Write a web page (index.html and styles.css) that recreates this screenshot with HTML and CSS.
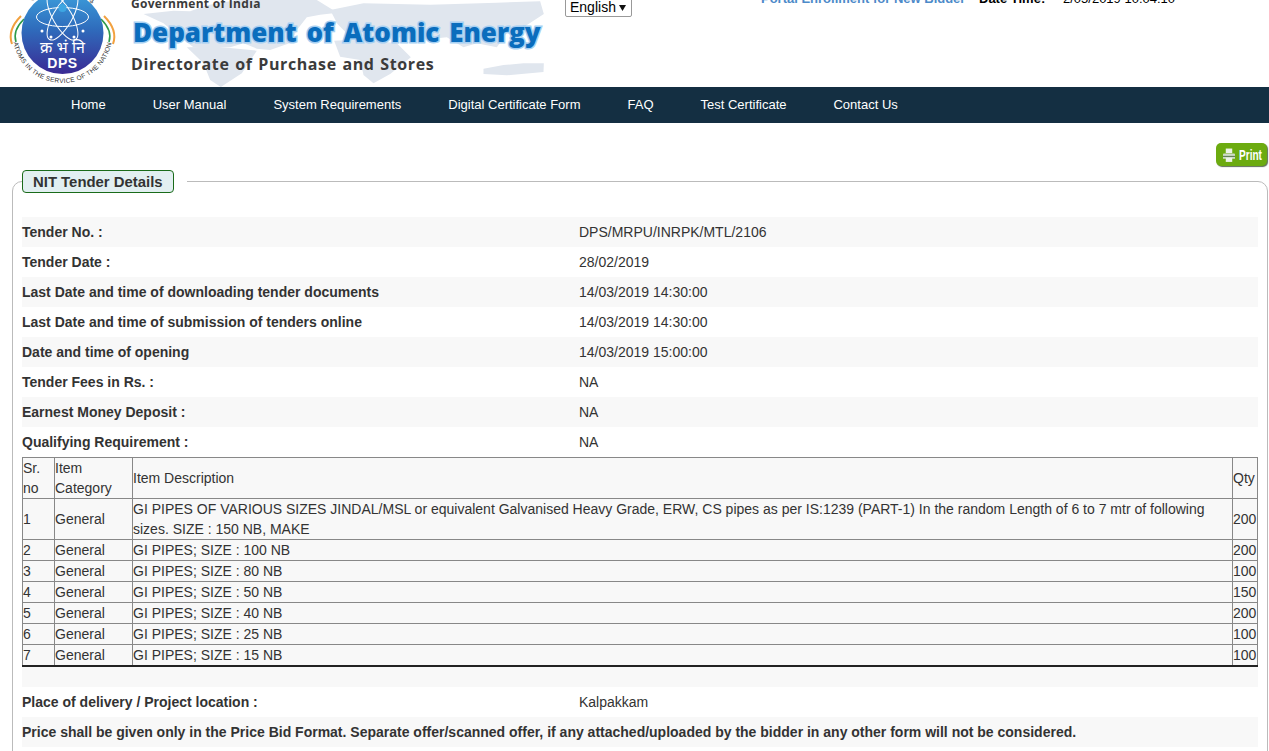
FILE: index.html
```html
<!DOCTYPE html>
<html lang="en">
<head>
<meta charset="utf-8">
<title>NIT Tender Details</title>
<link rel="stylesheet" href="styles.css">
</head>
<body>
<header class="top">
  <svg class="worldmap" width="414" height="87" viewBox="0 0 1241 261" aria-hidden="true">
    <g fill="#e0e6ee">
      <path d="M40 42 L130 32 L180 34 L230 16 L320 0 L560 0 L622 38 L570 44 L530 52 L500 90 L482 128 L420 150 L380 146 L340 130 L300 142 L190 142 L150 112 L100 70 Z"/>
      <path d="M170 142 L260 140 L380 152 L335 220 L272 261 L240 240 L220 190 Z"/>
      <path d="M600 30 L700 10 L900 14 L1100 8 L1230 4 L1241 42 L1180 82 L1130 100 L1100 142 L1040 130 L1000 142 L950 112 L850 122 L780 106 L660 110 L622 72 Z"/>
      <path d="M612 122 L700 118 L800 130 L842 172 L780 222 L730 250 L700 225 L690 180 L630 170 Z"/>
      <path d="M1060 206 L1120 195 L1180 190 L1241 190 L1240 216 L1130 226 L1060 222 Z"/>
    </g>
  </svg>
  <svg class="logo" width="120" height="87" viewBox="0 0 120 87" role="img" aria-label="DPS logo">
    <defs>
      <linearGradient id="disc" x1="0" y1="0" x2="0" y2="1">
        <stop offset="0" stop-color="#3c9fdc"/>
        <stop offset=".45" stop-color="#2f6cbc"/>
        <stop offset="1" stop-color="#3a2a94"/>
      </linearGradient>
      <path id="lower" d="M13 40 A50 50 0 0 0 112 40"/>
      <path id="upper" d="M21 20 A43.500 43.500 0 0 1 104 20"/>
    </defs>
    <path d="M12 44 C8 33 13 24 21 16" fill="none" stroke="#f2a13f" stroke-width="2"/>
    <path d="M16 42 C13 33 17 26 24 19" fill="none" stroke="#2e9a49" stroke-width="1.600"/>
    <path d="M113 44 C117 33 112 24 104 16" fill="none" stroke="#f2a13f" stroke-width="2"/>
    <path d="M109 42 C112 33 108 26 101 19" fill="none" stroke="#2e9a49" stroke-width="1.600"/>
    <circle cx="62.500" cy="33" r="41" fill="url(#disc)"/>
    <g fill="none" stroke="#fff" stroke-width="1">
      <ellipse cx="62.500" cy="17" rx="26" ry="9.500"/>
      <ellipse cx="62.500" cy="17" rx="26" ry="9.500" transform="rotate(60 62.500 17)"/>
      <ellipse cx="62.500" cy="17" rx="26" ry="9.500" transform="rotate(120 62.500 17)"/>
    </g>
    <circle cx="62.500" cy="8" r="4" fill="#3ea6e2"/>
    <g fill="#fff">
      <circle cx="42" cy="31" r="1.500"/><circle cx="83" cy="31" r="1.500"/>
      <circle cx="51" cy="37" r="1.500"/><circle cx="74" cy="37" r="1.500"/>
    </g>
    <text class="logo-hindi" x="62.500" y="53" text-anchor="middle">क्र भं नि</text>
    <text class="logo-dps" x="62.500" y="68" text-anchor="middle">DPS</text>
    <text class="logo-ring"><textPath href="#lower" startOffset="50%" text-anchor="middle">ATOMS IN THE SERVICE OF THE NATION</textPath></text>
    <text class="logo-top"><textPath href="#upper" startOffset="50%" text-anchor="middle">राष्ट्र की सेवा में परमाणु</textPath></text>
  </svg>
  <div class="brand">
    <div class="brand-gov">Government of India</div>
    <div class="brand-dept">Department of Atomic Energy</div>
    <div class="brand-dps">Directorate of Purchase and Stores</div>
  </div>
  <div class="lang"><select class="lang-select"><option>English</option></select></div>
  <div class="status">
    <a class="status-link" href="#">Portal Enrollment for New Bidder</a>
    <b class="status-label">Date Time:</b>
    <span class="status-time">2/05/2019 10:04:10</span>
  </div>
</header>
<nav class="menu">
  <a href="#">Home</a>
  <a href="#">User Manual</a>
  <a href="#">System Requirements</a>
  <a href="#">Digital Certificate Form</a>
  <a href="#">FAQ</a>
  <a href="#">Test Certificate</a>
  <a href="#">Contact Us</a>
</nav>
<main class="content">
  <div class="actions">
    <a class="print" href="#">
      <svg width="12" height="16" viewBox="0 0 13 16" aria-hidden="true">
        <path d="M3 1h7v5H3z" fill="#eef3ea"/>
        <path d="M1 6.500h11a1 1 0 0 1 1 1V12H0V7.500a1 1 0 0 1 1-1z" fill="#cfdcc8"/>
        <path d="M0 9.500h13" stroke="#4a6b3c" stroke-width="1"/>
        <path d="M3 11h7v4.500H3z" fill="#eef3ea"/>
      </svg>
      <span class="print-text">Print</span>
    </a>
  </div>
  <fieldset class="panel">
    <legend class="panel-legend"><span class="panel-title">NIT Tender Details</span></legend>
    <table class="details">
      <tr><th>Tender No. :</th><td>DPS/MRPU/INRPK/MTL/2106</td></tr>
      <tr><th>Tender Date :</th><td>28/02/2019</td></tr>
      <tr><th>Last Date and time of downloading tender documents</th><td>14/03/2019 14:30:00</td></tr>
      <tr><th>Last Date and time of submission of tenders online</th><td>14/03/2019 14:30:00</td></tr>
      <tr><th>Date and time of opening</th><td>14/03/2019 15:00:00</td></tr>
      <tr><th>Tender Fees in Rs. :</th><td>NA</td></tr>
      <tr><th>Earnest Money Deposit :</th><td>NA</td></tr>
      <tr><th>Qualifying Requirement :</th><td>NA</td></tr>
      <tr class="items-row"><td colspan="2" class="items-cell">
        <table class="items">
          <colgroup><col class="c-sr"><col class="c-cat"><col><col class="c-qty"></colgroup>
          <tr><td>Sr. no</td><td>Item Category</td><td>Item Description</td><td>Qty</td></tr>
          <tr><td>1</td><td>General</td><td>GI PIPES OF VARIOUS SIZES JINDAL/MSL or equivalent Galvanised Heavy Grade, ERW, CS pipes as per IS:1239 (PART-1) In the random Length of 6 to 7 mtr of following sizes. SIZE : 150 NB, MAKE</td><td>200</td></tr>
          <tr><td>2</td><td>General</td><td>GI PIPES; SIZE : 100 NB</td><td>200</td></tr>
          <tr><td>3</td><td>General</td><td>GI PIPES; SIZE : 80 NB</td><td>100</td></tr>
          <tr><td>4</td><td>General</td><td>GI PIPES; SIZE : 50 NB</td><td>150</td></tr>
          <tr><td>5</td><td>General</td><td>GI PIPES; SIZE : 40 NB</td><td>200</td></tr>
          <tr><td>6</td><td>General</td><td>GI PIPES; SIZE : 25 NB</td><td>100</td></tr>
          <tr><td>7</td><td>General</td><td>GI PIPES; SIZE : 15 NB</td><td>100</td></tr>
        </table>
      </td></tr>
      <tr><th>Place of delivery / Project location :</th><td>Kalpakkam</td></tr>
      <tr><th colspan="2">Price shall be given only in the Price Bid Format. Separate offer/scanned offer, if any attached/uploaded by the bidder in any other form will not be considered.</th></tr>
    </table>
  </fieldset>
</main>
</body>
</html>
```

FILE: styles.css
```css
html, body {
  margin: 0;
  height: 100%;
  overflow: hidden;
  background: #fff;
  font-family: "Liberation Sans", Arial, sans-serif;
  font-size: 14px;
  color: #333;
}
a { text-decoration: none; }

.top {
  position: relative;
  display: flex;
  height: 87px;
  overflow: hidden;
}
.worldmap {
  position: absolute;
  left: 130px;
  top: 0;
}
.logo {
  position: relative;
  flex: none;
  display: block;
  width: 120px;
  height: 87px;
}
.logo-hindi { font-family: "Noto Sans", "DejaVu Sans", sans-serif; font-size: 16px; fill: #fff; }
.logo-dps { font-family: "Liberation Sans", sans-serif; font-weight: 700; font-size: 14px; letter-spacing: .5px; fill: #fff; }
.logo-ring { font-family: "Liberation Sans", sans-serif; font-size: 6.500px; letter-spacing: .3px; fill: #333; }
.logo-top { font-family: "Noto Sans", "DejaVu Sans", sans-serif; font-size: 8.500px; fill: #444; }

.brand {
  position: relative;
  flex: none;
  width: 434px;
  margin-left: 11px;
  margin-top: -3px;
  font-family: "Open Sans", sans-serif;
  font-weight: 700;
  color: #3b3b3b;
}
.brand-gov { font-size: 12px; line-height: 14px; letter-spacing: .3px; }
.brand-dept {
  margin-top: 4px;
  margin-left: 2px;
  font-family: "Open Sans", sans-serif;
  font-weight: 800;
  font-size: 26px;
  line-height: 34px;
  word-spacing: 3px;
  color: #0a6dbd;
  -webkit-text-stroke: 3px #a7d0f2;
  paint-order: stroke fill;
  white-space: nowrap;
}
.brand-dps { margin-top: 4px; font-size: 16px; line-height: 22px; letter-spacing: .6px; word-spacing: 1px; white-space: nowrap; }

.lang { position: relative; flex: none; margin-top: -4px; }
.lang-select {
  display: block;
  appearance: none;
  width: 67px;
  height: 21px;
  padding: 0 0 0 4px;
  border: 1px solid #999;
  border-radius: 2px;
  background: #fff url("data:image/svg+xml,%3Csvg xmlns='http://www.w3.org/2000/svg' width='7' height='6'%3E%3Cpath d='M0 0h7L3.500 6z' fill='%23111'/%3E%3C/svg%3E") no-repeat 53px 8px;
  font: 14px "Liberation Sans", Arial, sans-serif;
  color: #000;
}

.status {
  position: relative;
  flex: none;
  display: flex;
  margin-left: 129px;
  margin-top: -9px;
  font-size: 13px;
  line-height: 16px;
  height: 16px;
  white-space: nowrap;
}
.status-link { font-weight: 700; color: #4d8ac9; width: 218px; }
.status-label { color: #000; width: 84px; }
.status-time { color: #000; }

.menu {
  display: flex;
  gap: 47px;
  height: 35px;
  padding: 0 0 1px 71px;
  align-items: center;
  background: #142f42;
}
.menu a { color: #fff; font-size: 13px; }

.content { padding: 20px 1px 0 12px; }
.actions { display: flex; justify-content: flex-end; height: 27px; }
.print {
  display: flex;
  align-items: center;
  justify-content: center;
  gap: 4px;
  width: 51px;
  height: 23px;
  margin-right: 1px;
  box-sizing: border-box;
  border-radius: 5px;
  background: #6cab10;
  box-shadow: 1px 1px 1px #5f6f58;
  color: #fff;
  font-family: "Liberation Sans", sans-serif;
  font-size: 14px;
  font-weight: 700;
}
.print-text { display: block; width: 22px; transform: scaleX(.72); transform-origin: left center; }
.panel {
  margin: 0;
  padding: 24px 9px 20px;
  border: 1px solid #bbb;
  border-radius: 10px;
  min-width: 0;
}
.panel-legend {
  padding: 0 13px 0 0;
}
.panel-title {
  display: block;
  box-sizing: border-box;
  height: 23px;
  padding: 1px 10px 0;
  line-height: 21px;
  border: 1px solid #1a6b1a;
  border-radius: 4px;
  background: #e2eff1;
  font-weight: 700;
  font-size: 14.900px;
  color: #333;
}
.details {
  width: 1236px;
  border-collapse: collapse;
}
.details > tbody > tr { height: 30px; }
.details > tbody > tr:nth-child(odd) { background: #f8f8f8; }
.details th {
  width: 557px;
  padding: 0;
  text-align: left;
  font-size: 14px;
  font-weight: 700;
}
.details td { padding: 0; }
.items-cell { padding-bottom: 20px !important; }
.items {
  width: 100%;
  border-collapse: collapse;
  border-top: 1px solid #222;
  border-left: 1px solid #222;
  border-right: 1px solid #222;
  border-bottom: 2px solid #222;
  line-height: 20px;
}
.items td { padding: 0; border: 1px solid #888; }
.c-sr { width: 32px; }
.c-cat { width: 78px; }
.c-qty { width: 25px; }
```
